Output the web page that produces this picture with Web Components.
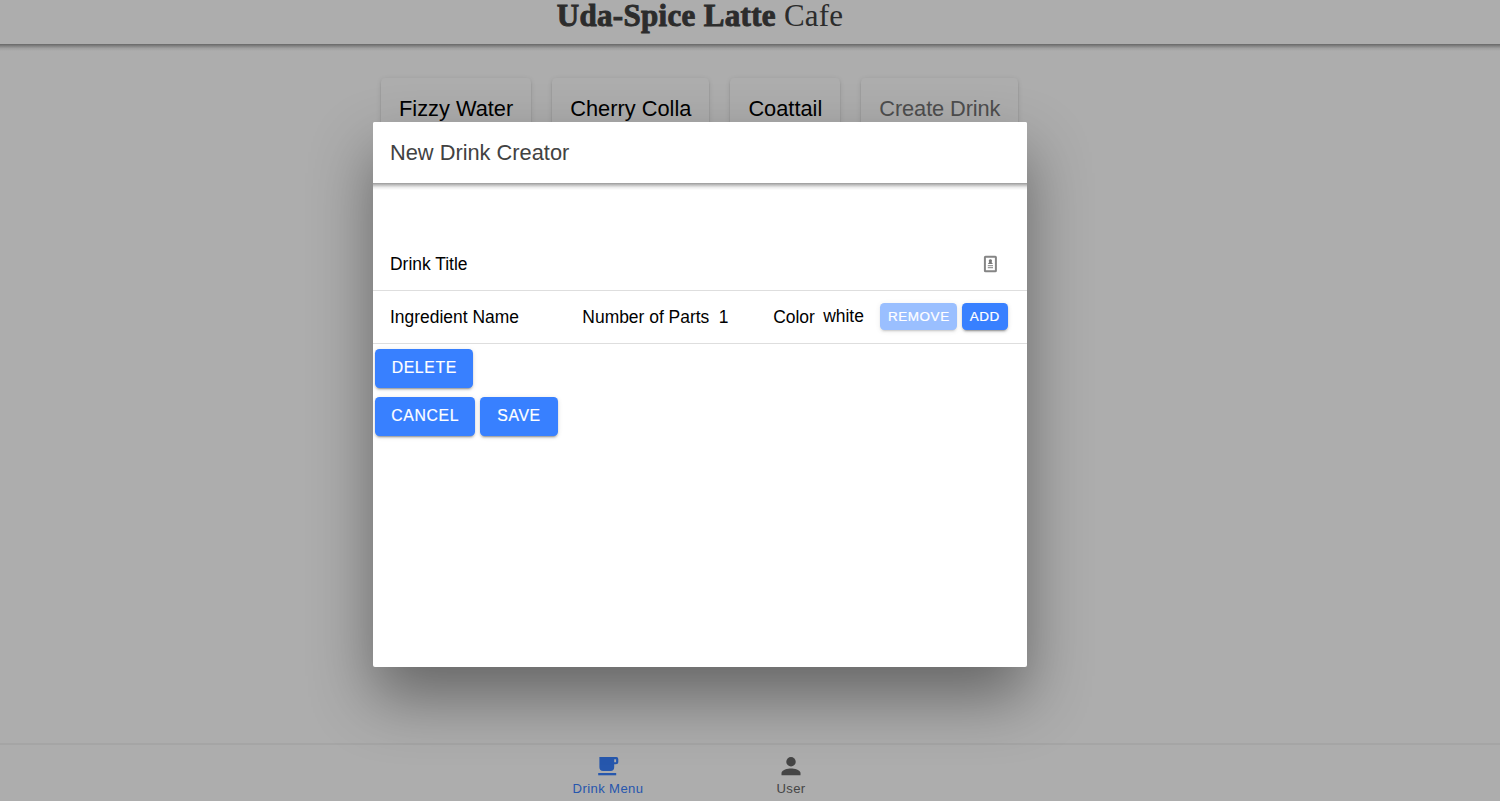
<!DOCTYPE html>
<html lang="en"><head><meta charset="utf-8"><title>Uda-Spice Latte Cafe</title>
<style>html,body{margin:0;height:100%;overflow:hidden;font-family:"Liberation Sans",Arial,sans-serif}</style></head>
<body><cafe-app></cafe-app>
<script>
const define=(name,html)=>{
  const t=document.createElement('template');t.innerHTML=html;
  customElements.define(name,class extends HTMLElement{
    constructor(){super();this.attachShadow({mode:'open'}).append(t.content.cloneNode(true));}
  });
};
define('drink-card',`<style>:host{display:block;box-sizing:border-box;height:70px;padding:18px 18px;border-radius:4.4px;font-size:21.8px;line-height:26px;white-space:nowrap;color:#000;box-shadow:0 3px 1px -2px rgba(0,0,0,.2),0 2px 2px 0 rgba(0,0,0,.14),0 1px 5px 0 rgba(0,0,0,.12)}:host([muted]){color:#737373;letter-spacing:-.1px}</style><slot></slot>`);
define('app-button',`<style>:host{display:flex;box-sizing:border-box;align-items:center;justify-content:center;height:39px;padding-bottom:2px;border-radius:4.4px;background:#3880ff;color:#fff;font-size:15.8px;letter-spacing:.62px;text-indent:.5px;-webkit-text-stroke:.2px #fff;white-space:nowrap;box-shadow:0 3px 1px -2px rgba(0,0,0,.2),0 2px 2px 0 rgba(0,0,0,.14),0 1px 5px 0 rgba(0,0,0,.12)}
:host([small]){height:27.5px;margin-top:-1px;padding-bottom:0;font-size:13.5px;letter-spacing:.55px}:host([disabled]){opacity:.5}</style><slot></slot>`);
define('app-toolbar',`<style>:host{display:flex;position:relative;box-sizing:border-box;align-items:center;background:#fff;color:#424242}:host::after{content:"";position:absolute;left:0;right:0;top:100%;height:7px;background:linear-gradient(rgba(0,0,0,.4),rgba(0,0,0,.24) 30%,rgba(0,0,0,.08) 62%,transparent)}</style><slot></slot>`);
define('form-row',`<style>:host{display:flex;box-sizing:border-box;height:53px;align-items:center;padding:0 19px 0 17.5px;border-bottom:1px solid #dedede;font-size:17.44px;color:#000;white-space:nowrap}</style><slot></slot>`);
define('tab-item',`<style>:host{display:flex;width:183px;flex-direction:column;align-items:center;color:#666;font-size:13.1px;letter-spacing:.39px}:host([active]){color:#3880ff}span{line-height:16px;margin-top:4px}</style><slot name="icon"></slot><span><slot></slot></span>`);
define('drink-modal',`<style>:host{display:flex;flex-direction:column;width:654px;height:545px;background:#fff;border-radius:2px;overflow:hidden;box-shadow:0 30px 62px rgba(0,0,0,.41)}
app-toolbar{height:61px;padding:0 17.5px;font-size:21.8px}
main{padding-top:55px}.title{justify-content:space-between;padding-right:29px}.name{width:192.5px}.parts{width:136.5px}.num{width:54.5px}.color{width:50px}.white{width:57px;margin-top:-1px}
.actions{display:flex;gap:4.5px;padding:5px 2.5px 4px}.actions+.actions{padding-top:5px}svg{display:block}</style>
<app-toolbar>New Drink Creator</app-toolbar>
<main><form-row class="title"><span>Drink Title</span><svg width="15" height="18" viewBox="0 0 15 18"><rect x="1.9" y="1.7" width="11" height="14.6" rx=".6" fill="#fff" stroke="#858585" stroke-width="2"/><path d="M7.4 4.3a1.6 1.6 0 0 1 1.1 2.8l1.4 1.9H4.9l1.4-1.9a1.6 1.6 0 0 1 1.1-2.8z" fill="#777"/><path d="M4.8 10.6H10M4.8 12.7H10" stroke="#999" stroke-width="1.2"/></svg></form-row>
<form-row><span class="name">Ingredient Name</span><span class="parts">Number of Parts</span><span class="num">1</span><span class="color">Color</span><span class="white">white</span><app-button small disabled style="width:77px;margin-right:4.5px">REMOVE</app-button><app-button small style="width:46px">ADD</app-button></form-row>
<div class="actions"><app-button style="width:98px">DELETE</app-button></div><div class="actions"><app-button style="width:100px">CANCEL</app-button><app-button style="width:78.5px">SAVE</app-button></div></main>`);
define('cafe-app',`<style>:host{display:grid;height:100vh;background:#fff}
.page,.overlay{grid-area:1/1;min-height:0;min-width:0}.page{display:flex;flex-direction:column;height:100vh}
.head{height:44px;justify-content:center;flex:none;padding-right:100px}.brand{font:31px/36px "Liberation Serif",serif;color:#424242;white-space:nowrap;display:flex;gap:8px;height:44px;margin-top:-5px}.brand b{-webkit-text-stroke:.9px #424242;letter-spacing:.32px}.brand i{font-style:normal;letter-spacing:.2px}
.cards{display:flex;gap:21px;flex:1;align-items:flex-start;padding:34px 0 0 381px}
.tabs{display:flex;justify-content:center;height:46px;padding:10px 101px 0 0;border-top:2px solid #f3f3f3;flex:none}
.overlay{display:flex;align-items:flex-start;justify-content:center;box-sizing:border-box;height:100vh;padding:122px 100px 0 0;background:rgba(0,0,0,.32);z-index:2}
drink-modal{margin-left:-1px}svg{display:block}</style>
<div class="page"><app-toolbar class="head"><div class="brand"><b>Uda-Spice Latte</b><i>Cafe</i></div></app-toolbar>
<div class="cards"><drink-card>Fizzy Water</drink-card><drink-card>Cherry Colla</drink-card><drink-card>Coattail</drink-card><drink-card muted>Create Drink</drink-card></div>
<nav class="tabs"><tab-item active><svg slot="icon" width="24" height="22" viewBox="0 0 24 22" fill="currentColor"><path fill-rule="evenodd" d="M3.4 2H20.3Q22.3 2 22.3 4V7Q22.3 9.3 20 9.3H18.2V12.3Q18.2 16 14.5 16H7.1Q3.4 16 3.4 12.3ZM18.2 4.2V7.2H20.1V4.2Z"/><path d="M2.2 18H20.2V20.3H2.2Z"/></svg>Drink Menu</tab-item><tab-item><svg slot="icon" width="24" height="22" viewBox="0 0 24 22" fill="currentColor"><circle cx="12" cy="6.8" r="4.7"/><path d="M2.5 20.3V18C2.5 14.8 8.8 13.4 12 13.4S21.5 14.8 21.5 18V20.3Z"/></svg>User</tab-item></nav></div>
<div class="overlay"><drink-modal></drink-modal></div>`);
</script></body></html>
